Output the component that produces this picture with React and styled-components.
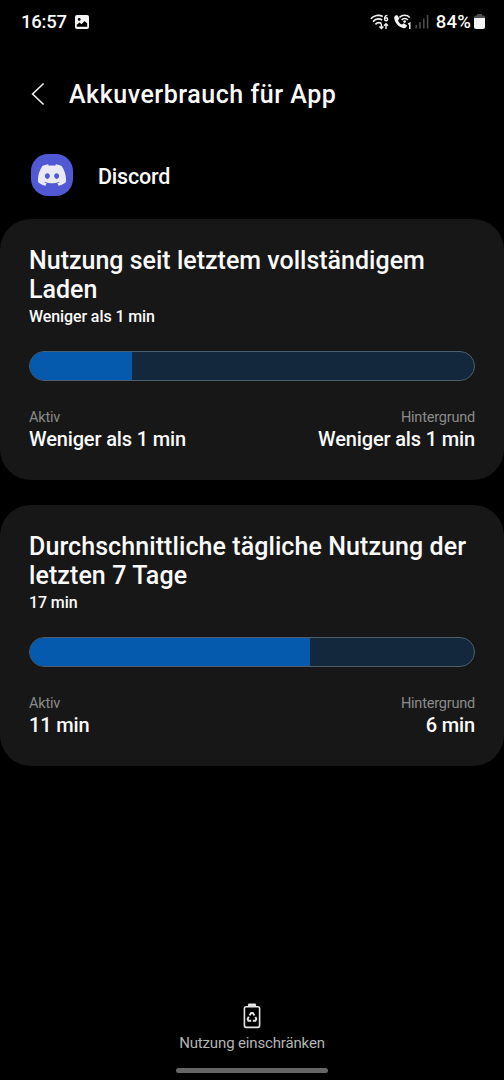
import styled, { createGlobalStyle } from "styled-components";
import { SiDiscord } from "react-icons/si";

const GlobalStyle = createGlobalStyle`
  * {
    box-sizing: border-box;
  }

  body {
    margin: 0;
    background: #000;
    color: #fafafa;
    font-family: Roboto, sans-serif;
    font-weight: 500;
  }
`;

const Screen = styled.div`
  display: flex;
  flex-direction: column;
  width: 504px;
  height: 1080px;
  overflow: hidden;
`;

const StatusBar = styled.div`
  display: flex;
  align-items: center;
  height: 43px;
  padding: 0 19px 0 21px;
`;

const StatusText = styled.span`
  font-size: 18.5px;
  line-height: 22px;
  letter-spacing: ${(props) => props.$spacing || "0"};
`;

const StatusIcons = styled.div`
  display: flex;
  align-items: center;
  margin-left: auto;
`;

const StatusIcon = styled.svg`
  display: block;
  flex: none;
  margin-left: ${(props) => props.$gap || 0}px;
`;

const BatteryText = styled(StatusText)`
  margin-left: 7px;
`;

const Header = styled.header`
  display: flex;
  align-items: center;
  height: 52px;
  margin-top: 25px;
  padding-left: 31px;
`;

const Title = styled.h1`
  margin: 0 0 0 24px;
  padding-top: 2px;
  font-size: 25px;
  font-weight: 500;
  line-height: 30px;
  letter-spacing: 0.53px;
`;

const AppRow = styled.div`
  display: flex;
  align-items: center;
  height: 42px;
  margin: 34px 0 23px;
  padding-left: 31px;
`;

const AppIcon = styled.div`
  display: flex;
  align-items: center;
  justify-content: center;
  width: 42px;
  height: 42px;
  border-radius: 17px;
  background: #5059d3;
  color: #e9eaf3;
`;

const AppName = styled.span`
  margin-left: 25px;
  padding-top: 3px;
  font-size: 21.5px;
  line-height: 26px;
  letter-spacing: -0.2px;
`;

const Cards = styled.main`
  display: flex;
  flex-direction: column;
  gap: 25px;
`;

const Card = styled.section`
  padding: 27px 29px 29px;
  border-radius: 31px;
  background: #171717;
`;

const CardTitle = styled.h2`
  margin: 0;
  font-size: 25px;
  font-weight: 500;
  line-height: 29px;
  letter-spacing: ${(props) => props.$spacing || "0"};
`;

const Total = styled.div`
  margin-top: 3px;
  font-size: 16px;
  line-height: 20px;
  letter-spacing: -0.1px;
`;

const Bar = styled.div`
  height: 30px;
  margin-top: 24px;
  overflow: hidden;
  border: 1px solid #4b5e6e;
  border-radius: 15px;
  background: #13283d;
`;

const BarFill = styled.div`
  height: 100%;
  background: #055aad;
`;

const Stats = styled.div`
  display: flex;
  justify-content: space-between;
  margin-top: 28px;
`;

const Stat = styled.div`
  text-align: ${(props) => props.$align || "left"};
`;

const StatLabel = styled.div`
  color: #8b8b8b;
  font-size: 14.5px;
  font-weight: 400;
  line-height: 18px;
  letter-spacing: -0.2px;
`;

const StatValue = styled.div`
  font-size: 20px;
  line-height: 24px;
  letter-spacing: -0.15px;
`;

const Footer = styled.footer`
  display: flex;
  flex-direction: column;
  align-items: center;
  margin-top: auto;
`;

const FooterLabel = styled.span`
  margin-top: 5px;
  color: #b4b4b4;
  font-size: 15px;
  font-weight: 400;
  line-height: 18px;
  letter-spacing: -0.15px;
`;

const NavHandle = styled.div`
  width: 152px;
  height: 5px;
  margin: 16px 0 7px;
  border-radius: 3px;
  background: #666;
`;

function PictureIcon() {
  return (
    <StatusIcon $gap={8} width="14" height="14" viewBox="0 0 14 14">
      <rect width="14" height="14" rx="2" fill="#f4f4f4" />
      <circle cx="4.2" cy="4.4" r="1.4" fill="#000" />
      <path d="M1.8 11.8V9.8L4.6 7.4L6.4 9.2L9.6 6L12.2 8.6V11.8Z" fill="#000" />
    </StatusIcon>
  );
}

function WifiIcon() {
  return (
    <StatusIcon width="19" height="16" viewBox="0 0 19 16">
      <g fill="none" stroke="#f0f0f0" strokeWidth="1.7">
        <path d="M0.8 4.8C4 1.2 9 0.4 12.8 2.4" />
        <path d="M3 7.6C5.4 5 8.8 4.3 12.2 6" />
        <path d="M5.4 10.4C7.2 8.5 9.4 8.2 11.4 9.4" />
        <path d="M17.4 1.4C15.4 1.4 14.6 2.8 14.6 5" strokeWidth="1.4" />
        <circle cx="16.1" cy="5.2" r="1.5" strokeWidth="1.4" />
        <path d="M11.4 9.8V14M9.4 12.4L11.4 14.4L13.4 12.4" strokeWidth="1.4" />
        <path d="M16 15V9.8M14 11.8L16 9.8L18 11.8" strokeWidth="1.4" />
      </g>
    </StatusIcon>
  );
}

function WifiCallIcon() {
  return (
    <StatusIcon $gap={5} width="18" height="16" viewBox="0 0 18 16">
      <path
        d="M1 1.8L3.2 1L5.4 4.6L4 6.4C4.8 8.4 6 9.7 8 10.6L9.8 9.2L13 11.6C12.4 13.6 11.2 14.4 9.6 14.2C4.6 13.4 0.2 8.4 0.2 3.6Z"
        fill="#f4f4f4"
      />
      <g fill="none" stroke="#f0f0f0" strokeWidth="1.5">
        <path d="M5.4 3.4C8.4 0.4 13 0.4 15.8 3.4" />
        <path d="M7.6 5.9C9.4 4.1 12 4.1 13.8 5.9" />
        <path d="M14 10.2L15.8 9.2V15" />
      </g>
      <circle cx="10.6" cy="7.6" r="1.3" fill="#f0f0f0" />
    </StatusIcon>
  );
}

function SignalIcon() {
  return (
    <StatusIcon $gap={3} width="14" height="15" viewBox="0 0 14 15">
      <path
        d="M1.2 14.5V11M5 14.5V8M8.8 14.5V4.4M12.6 14.5V1"
        stroke="#505050"
        strokeWidth="1.5"
      />
    </StatusIcon>
  );
}

function BatteryIcon() {
  return (
    <StatusIcon $gap={3} width="11" height="15" viewBox="0 0 11 15">
      <path d="M3 0H8V1.6H9.4Q11 1.6 11 3.2V5H0V3.2Q0 1.6 1.6 1.6H3Z" fill="#4d4d4d" />
      <path d="M0 4H11V13Q11 15 9 15H2Q0 15 0 13Z" fill="#f4f4f4" />
    </StatusIcon>
  );
}

function BackIcon() {
  return (
    <svg width="14" height="24" viewBox="0 0 14 24" fill="none">
      <path d="M12.6 1.5L1.6 12L12.6 22.5" stroke="#f0f0f0" strokeWidth="1.6" />
    </svg>
  );
}

function SaverIcon() {
  return (
    <svg width="18" height="26" viewBox="0 0 18 26" fill="none">
      <rect x="5" y="0.5" width="8" height="3.5" rx="1" fill="#e4e4e4" />
      <rect x="1.4" y="3.8" width="15.2" height="20.6" rx="1.8" stroke="#e4e4e4" strokeWidth="1.6" />
      <g stroke="#e4e4e4" strokeWidth="1.9">
        <path d="M6.5 12.4L8.2 10H9.8L11.5 12.6" />
        <path d="M12.4 13.8L13.4 16L12.4 17.8H9.8" />
        <path d="M8.2 17.8H5.4L4.6 16L5.8 13.8" />
      </g>
    </svg>
  );
}

function UsageCard({ title, spacing, total, percent, active, background }) {
  return (
    <Card>
      <CardTitle $spacing={spacing}>{title}</CardTitle>
      <Total>{total}</Total>
      <Bar>
        <BarFill style={{ width: `${percent}%` }} />
      </Bar>
      <Stats>
        <Stat>
          <StatLabel>Aktiv</StatLabel>
          <StatValue>{active}</StatValue>
        </Stat>
        <Stat $align="right">
          <StatLabel>Hintergrund</StatLabel>
          <StatValue>{background}</StatValue>
        </Stat>
      </Stats>
    </Card>
  );
}

function App() {
  return (
    <>
      <GlobalStyle />
      <Screen>
        <StatusBar>
          <StatusText $spacing="-0.25px">16:57</StatusText>
          <PictureIcon />
          <StatusIcons>
            <WifiIcon />
            <WifiCallIcon />
            <SignalIcon />
            <BatteryText $spacing="0.2px">84%</BatteryText>
            <BatteryIcon />
          </StatusIcons>
        </StatusBar>

        <Header>
          <BackIcon />
          <Title>Akkuverbrauch für App</Title>
        </Header>

        <AppRow>
          <AppIcon>
            <SiDiscord size={28} />
          </AppIcon>
          <AppName>Discord</AppName>
        </AppRow>

        <Cards>
          <UsageCard
            title="Nutzung seit letztem vollständigem Laden"
            total="Weniger als 1 min"
            percent={22.9}
            active="Weniger als 1 min"
            background="Weniger als 1 min"
          />
          <UsageCard
            title="Durchschnittliche tägliche Nutzung der letzten 7 Tage"
            spacing="0.08px"
            total="17 min"
            percent={63}
            active="11 min"
            background="6 min"
          />
        </Cards>

        <Footer>
          <SaverIcon />
          <FooterLabel>Nutzung einschränken</FooterLabel>
          <NavHandle />
        </Footer>
      </Screen>
    </>
  );
}

export default App;
